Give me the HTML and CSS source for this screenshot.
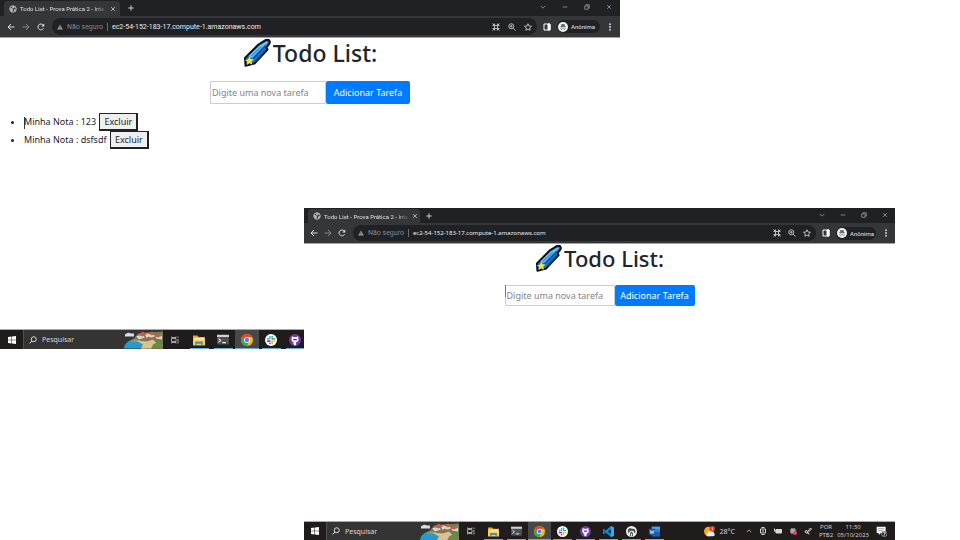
FILE: index.html
```
<!DOCTYPE html>
<html lang="pt-BR">
<head>
<meta charset="utf-8">
<title>Todo List - Prova Prática 2</title>
<link rel="stylesheet" href="styles.css">
</head>
<body>
<svg class="sprite" aria-hidden="true">
  <symbol id="globe" viewBox="0 0 16 16"><circle cx="8" cy="8" r="6.500" fill="#35363a" stroke="#b9bcc0" stroke-width="2"/><path d="M2 5l5 2 1 3-1 4-4-3zM7 2l5 1-1 3-3 1-2-2zM10 9l4-1-1 4-3 1z" fill="#b9bcc0" stroke="none"/></symbol>
  <symbol id="close" viewBox="0 0 16 16"><path d="M3 3l10 10M13 3L3 13"/></symbol>
  <symbol id="plus" viewBox="0 0 16 16"><path d="M8 1v14M1 8h14"/></symbol>
  <symbol id="down" viewBox="0 0 16 16"><path d="M2 5l6 6 6-6"/></symbol>
  <symbol id="up" viewBox="0 0 16 16"><path d="M2 11l6-6 6 6"/></symbol>
  <symbol id="minus" viewBox="0 0 16 16"><path d="M2 8h12"/></symbol>
  <symbol id="restore" viewBox="0 0 16 16"><path d="M2 5h9v9H2zM5 5V2h9v9h-3"/></symbol>
  <symbol id="back" viewBox="0 0 16 16"><path d="M15 8H2M8 2L2 8l6 6"/></symbol>
  <symbol id="forward" viewBox="0 0 16 16"><path d="M1 8h13M8 2l6 6-6 6"/></symbol>
  <symbol id="reload" viewBox="0 0 16 16"><path d="M13 10.500A5.800 5.800 0 1 1 12.500 4.300"/><path d="M14.500 1v6h-6z" fill="currentColor" stroke="none"/></symbol>
  <symbol id="warn" viewBox="0 0 16 16"><path d="M8 1l7.500 13.500H.5z" fill="currentColor" stroke="none"/><path d="M8 6v4M8 11.500v1.500" stroke="#202124"/></symbol>
  <symbol id="qr" viewBox="0 0 16 16"><path d="M1 1l4 4M15 1l-4 4M1 15l4-4M15 15l-4-4M5 5h6v6H5zM1 5h4V1M15 5h-4V1M1 11h4v4M15 11h-4v4"/></symbol>
  <symbol id="magnify" viewBox="0 0 16 16"><circle cx="6.500" cy="6.500" r="5"/><path d="M10.500 10.500L15 15M4 6.500h5M6.500 4v5"/></symbol>
  <symbol id="search" viewBox="0 0 16 16"><circle cx="9.500" cy="6.500" r="5"/><path d="M6 10l-5 5"/></symbol>
  <symbol id="star" viewBox="0 0 16 16"><path d="M8 1.500l2 4.500 5 .5-3.700 3.300 1 4.900L8 12l-4.300 2.700 1-4.900L1 6.500 6 6z"/></symbol>
  <symbol id="panel" viewBox="0 0 16 16"><path d="M2 2h12v12H2z"/><path d="M10 2h4v12h-4z" fill="currentColor"/></symbol>
  <symbol id="incognito" viewBox="0 0 16 16"><circle cx="8" cy="8" r="8" fill="#f1f3f4" stroke="none"/><path d="M5.500 3h5l1 4h-7zM3 7h10v1H3z" fill="#6b6e72" stroke="none"/><circle cx="5.700" cy="10.500" r="1.500" stroke="#6b6e72"/><circle cx="10.300" cy="10.500" r="1.500" stroke="#6b6e72"/></symbol>
  <symbol id="dots" viewBox="0 0 16 16"><g fill="currentColor" stroke="none"><circle cx="8" cy="2.500" r="1.800"/><circle cx="8" cy="8" r="1.800"/><circle cx="8" cy="13.500" r="1.800"/></g></symbol>
  <symbol id="comet" viewBox="0 0 27 28"><path d="M1.500 19L15 5.500 22 1.200q3-1.200 4 .8t-1.200 4L23 8.500l1 2L11 24.500 2 26.800z" fill="#1473c8" stroke="#0b1118" stroke-width="2" stroke-linejoin="round"/><path d="M5 17L16 6.500 23 2.500q1.500 0 1 1.500L9 19z" fill="#6cc4f5"/><path d="M9 20L22 6.500M12 22l10-11" stroke="#0b4fa3" stroke-width="1.500"/><path d="M8 17L18 7.500" stroke="#3c93de" stroke-width="1.500"/><path d="M6 17l1.300 3 3.200.3-2.400 2.200.8 3.200-2.900-1.600-2.800 1.800.6-3.300L1.200 21l3.300-.5z" fill="#ffdf35"/></symbol>
  <symbol id="windows" viewBox="0 0 16 16"><path d="M0 2.200L7 1.200v6.300H0zM8 1l8-1v7.500H8zM0 8.500h7v6.300l-7-1zM8 8.500h8V16l-8-1z" fill="#fff" stroke="none"/></symbol>
  <symbol id="island" viewBox="0 0 39 18"><path d="M0 18Q0 12 8 9l14 2 1 7z" fill="#2899cc"/><path d="M6 11l7-5 8-3L39 2v16H17q4-5-2-7z" fill="#a69370"/><path d="M9 9l5-6 10-1 15-1v13l-8-1-4-3-7 1-8-2z" fill="#6c7f52"/><path d="M12 6l6-2 3 3-6 2zM20 3l9 0 2 3-8 2zM31 5l7-1v5l-6-1z" fill="#d9d7cd"/><path d="M14 4l5-3 4 3-5 2zM24 3l4-2 4 2-4 2zM30 6l4-3 5 2-5 2zM21 8l4-2 3 2-4 1z" fill="#c06049"/><path d="M12 10l11 1 6-2 4 4-5 5H17l2-4z" fill="#dcc293"/><path d="M29 14l5-3 5 3v4H27z" fill="#6f8a45"/><path d="M1 4q3-3 6-1h3v3H1z" fill="#d8dddf"/></symbol>
  <symbol id="taskview" viewBox="0 0 16 16"><path d="M1 1v2h9V1M1 5h9v6H1zM1 15v-2h9v2M14 1v3M14 6v9"/></symbol>
  <symbol id="folder" viewBox="0 0 16 16"><path d="M0 2h6l1.500 2H16v11H0z" fill="#e7a927"/><path d="M1 5h14v5H1z" fill="#ffe694"/><path d="M0 8h16v7H0z" fill="#fbd157"/><path d="M3 10h10v5h-2v-2H5v2H3z" fill="#3c91d0"/></symbol>
  <symbol id="terminal" viewBox="0 0 16 16"><path d="M0 2h16v12H0z" fill="#4b4e52"/><path d="M0 1h16v3H0z" fill="#d0d2d4"/><path d="M2 6l3 2.500L2 11M7 11.500h5" stroke="#eee" fill="none" stroke-width="1.400"/></symbol>
  <symbol id="chrome" viewBox="0 0 16 16"><circle cx="8" cy="8" r="8" fill="#fbbc04"/><path d="M8 16A8 8 0 0 1 1.070 4L5 10l5 2z" fill="#34a853"/><path d="M14.930 4A8 8 0 0 0 1.070 4L4.500 10 8 4z" fill="#e94235"/><circle cx="8" cy="8" r="4" fill="#fff"/><circle cx="8" cy="8" r="3" fill="#4285f4"/></symbol>
  <symbol id="slack" viewBox="0 0 16 16"><circle cx="8" cy="8" r="8" fill="#fff"/><g stroke-width="2.200" stroke-linecap="round"><path d="M6.500 3.500v3M3.300 6.500h1" stroke="#36c5f0"/><path d="M9.500 6.500h3M9.500 3.300v1" stroke="#2eb67d"/><path d="M9.500 9.500v3M12.500 9.500h.3" stroke="#ecb22e"/><path d="M3.500 9.500h3M6.500 12.500v.2" stroke="#e01e5a"/></g></symbol>
  <symbol id="github" viewBox="0 0 16 16"><circle cx="8" cy="8" r="8" fill="#6d3aa2"/><path d="M4 3l2 1h4l2-1 .5 3q1 4-3 5v4H6.500v-2l-2-1 2-.5V11q-4-1-3-5z" fill="#fff"/><path d="M5.500 6.500h5v2h-5z" fill="#6d3aa2"/></symbol>
  <symbol id="code" viewBox="0 0 16 16"><path d="M11.500 0L16 2v12l-4.500 2L4 9.500 1.500 12 0 11V5l1.500-1L4 6.500z" fill="#148bd3"/><path d="M11.500 4.500v7L7 8zM1.500 6.500v3L3 8z" fill="#1e1f22"/><path d="M11.500 0L16 2v12l-4.500 2z" fill="#38a9ee"/></symbol>
  <symbol id="beaver" viewBox="0 0 16 16"><circle cx="8" cy="8" r="8" fill="#e9eeec"/><path d="M3 5l3-2 2 1h3l2 1 1 4-2 1-1-3H6l-2 3-1-1z" fill="#3e4846"/><path d="M6 10l2-2 2 2v5H6z" fill="#3e4846"/><path d="M7.300 11h1.400v3H7.300z" fill="#fff"/></symbol>
  <symbol id="word" viewBox="0 0 16 16"><path d="M4 1h12v14H4z" fill="#2b7cd3"/><path d="M4 1h12v4H4z" fill="#41a5ee"/><path d="M4 9h12v6H4z" fill="#185abd"/><path d="M0 4h9v9H0z" fill="#1c56a8"/><path d="M1.500 6l1.500 5 1.500-4L6 11l1.500-5" stroke="#fff" fill="none"/></symbol>
  <symbol id="weather" viewBox="0 0 16 16"><circle cx="7" cy="8" r="7" fill="#f8a91b"/><path d="M5 15a3 3 0 0 1 0-5 4 4 0 0 1 7-1 3 3 0 0 1 1 6z" fill="#e8eef7"/><circle cx="12" cy="4" r="4" fill="#dd3c2c"/><path d="M12 2v4" stroke="#fff"/></symbol>
  <symbol id="meet" viewBox="0 0 16 16"><path d="M3 4h10v8H3zM5 1h6M5 15h6M8 6v4"/></symbol>
  <symbol id="battery" viewBox="0 0 16 16"><path d="M4 5h11v7H4z" fill="currentColor"/><path d="M1 3v4h3M2 7v3"/></symbol>
  <symbol id="slacktray" viewBox="0 0 16 16"><path d="M6 2v12M10 2v12M2 6h12M2 10h12" stroke-width="2"/><circle cx="12" cy="12" r="4" fill="#f0367d" stroke="none"/></symbol>
  <symbol id="pen" viewBox="0 0 16 16"><path d="M6 10L13 2l2 2-7 7zM6 7q-5 0-4 3t6 2q3 0 2 3"/></symbol>
  <symbol id="notice" viewBox="0 0 16 16"><path d="M1 1h13v9H7l-3 3v-3H1z" fill="#fff" stroke="none"/><path d="M3 4h9M3 7h7" stroke="#777"/><circle cx="12" cy="11.500" r="4" fill="#303030" stroke="#aaa"/><path d="M10.500 9.500h3L11.500 14" stroke="#fff"/></symbol>
</svg>

<main class="desktop">
  <section class="window window-notes" aria-label="Lista com notas">
    <header class="titlebar">
      <div class="tab"><svg class="icon favicon"><use href="#globe"/></svg><span class="tab-title">Todo List - Prova Prática 2 - Inte</span><button class="glyph tab-close" aria-label="Fechar guia"><svg class="icon small"><use href="#close"/></svg></button></div>
      <button class="glyph new-tab" aria-label="Nova guia"><svg class="icon small"><use href="#plus"/></svg></button>
      <div class="controls"><button class="glyph" aria-label="Pesquisar guias"><svg class="icon small"><use href="#down"/></svg></button><button class="glyph" aria-label="Minimizar"><svg class="icon small"><use href="#minus"/></svg></button><button class="glyph" aria-label="Restaurar"><svg class="icon small"><use href="#restore"/></svg></button><button class="glyph" aria-label="Fechar"><svg class="icon small"><use href="#close"/></svg></button></div>
    </header>
    <nav class="toolbar" aria-label="Navegação">
      <div class="history"><button class="glyph" aria-label="Voltar"><svg class="icon"><use href="#back"/></svg></button><button class="glyph dim" aria-label="Avançar"><svg class="icon"><use href="#forward"/></svg></button><button class="glyph" aria-label="Atualizar"><svg class="icon"><use href="#reload"/></svg></button></div>
      <div class="omnibox"><svg class="icon small muted"><use href="#warn"/></svg><span class="unsafe">Não seguro</span><a class="url" href="#">ec2-54-152-183-17.compute-1.amazonaws.com</a>
        <div class="actions"><svg class="icon"><use href="#qr"/></svg><svg class="icon"><use href="#magnify"/></svg><svg class="icon"><use href="#star"/></svg></div></div>
      <button class="glyph side" aria-label="Painel lateral"><svg class="icon"><use href="#panel"/></svg></button>
      <button class="profile"><svg class="avatar"><use href="#incognito"/></svg>Anônima</button>
      <button class="glyph more" aria-label="Mais"><svg class="icon"><use href="#dots"/></svg></button>
    </nav>
    <div class="page">
      <h1><svg class="comet" aria-hidden="true"><use href="#comet"/></svg>Todo List:</h1>
      <form class="task-form"><input type="text" aria-label="Nova tarefa" placeholder="Digite uma nova tarefa"><button type="button">Adicionar Tarefa</button></form>
      <ul class="notes">
        <li><span class="caret"></span>Minha Nota : 123 <button>Excluir</button></li>
        <li>Minha Nota : dsfsdf <button>Excluir</button></li>
      </ul>
    </div>
    <footer class="taskbar">
      <button class="start" aria-label="Iniciar"><svg class="icon"><use href="#windows"/></svg></button>
      <div class="search"><svg class="icon"><use href="#search"/></svg><span>Pesquisar</span><svg class="island"><use href="#island"/></svg></div>
      <div class="apps"><button class="plain" aria-label="Visão de tarefas"><svg class="icon"><use href="#taskview"/></svg></button><button aria-label="Arquivos"><svg class="app"><use href="#folder"/></svg></button><button aria-label="Terminal"><svg class="app"><use href="#terminal"/></svg></button><button class="active" aria-label="Chrome"><svg class="app"><use href="#chrome"/></svg></button><button aria-label="Slack"><svg class="app"><use href="#slack"/></svg></button><button aria-label="GitHub"><svg class="app"><use href="#github"/></svg></button></div>
    </footer>
  </section>

  <section class="window window-empty" aria-label="Lista vazia">
    <header class="titlebar">
      <div class="tab"><svg class="icon favicon"><use href="#globe"/></svg><span class="tab-title">Todo List - Prova Prática 2 - Inte</span><button class="glyph tab-close" aria-label="Fechar guia"><svg class="icon small"><use href="#close"/></svg></button></div>
      <button class="glyph new-tab" aria-label="Nova guia"><svg class="icon small"><use href="#plus"/></svg></button>
      <div class="controls"><button class="glyph" aria-label="Pesquisar guias"><svg class="icon small"><use href="#down"/></svg></button><button class="glyph" aria-label="Minimizar"><svg class="icon small"><use href="#minus"/></svg></button><button class="glyph" aria-label="Restaurar"><svg class="icon small"><use href="#restore"/></svg></button><button class="glyph" aria-label="Fechar"><svg class="icon small"><use href="#close"/></svg></button></div>
    </header>
    <nav class="toolbar" aria-label="Navegação">
      <div class="history"><button class="glyph" aria-label="Voltar"><svg class="icon"><use href="#back"/></svg></button><button class="glyph dim" aria-label="Avançar"><svg class="icon"><use href="#forward"/></svg></button><button class="glyph" aria-label="Atualizar"><svg class="icon"><use href="#reload"/></svg></button></div>
      <div class="omnibox"><svg class="icon small muted"><use href="#warn"/></svg><span class="unsafe">Não seguro</span><a class="url" href="#">ec2-54-152-183-17.compute-1.amazonaws.com</a>
        <div class="actions"><svg class="icon"><use href="#qr"/></svg><svg class="icon"><use href="#magnify"/></svg><svg class="icon"><use href="#star"/></svg></div></div>
      <button class="glyph side" aria-label="Painel lateral"><svg class="icon"><use href="#panel"/></svg></button>
      <button class="profile"><svg class="avatar"><use href="#incognito"/></svg>Anônima</button>
      <button class="glyph more" aria-label="Mais"><svg class="icon"><use href="#dots"/></svg></button>
    </nav>
    <div class="page">
      <h1><svg class="comet" aria-hidden="true"><use href="#comet"/></svg>Todo List:</h1>
      <form class="task-form"><span class="caret"></span><input type="text" aria-label="Nova tarefa" placeholder="Digite uma nova tarefa"><button type="button">Adicionar Tarefa</button></form>
    </div>
    <footer class="taskbar">
      <button class="start" aria-label="Iniciar"><svg class="icon"><use href="#windows"/></svg></button>
      <div class="search"><svg class="icon"><use href="#search"/></svg><span>Pesquisar</span><svg class="island"><use href="#island"/></svg></div>
      <div class="apps"><button class="plain" aria-label="Visão de tarefas"><svg class="icon"><use href="#taskview"/></svg></button><button aria-label="Arquivos"><svg class="app"><use href="#folder"/></svg></button><button aria-label="Terminal"><svg class="app"><use href="#terminal"/></svg></button><button class="active" aria-label="Chrome"><svg class="app"><use href="#chrome"/></svg></button><button aria-label="Slack"><svg class="app"><use href="#slack"/></svg></button><button aria-label="GitHub"><svg class="app"><use href="#github"/></svg></button><button aria-label="Editor"><svg class="app"><use href="#code"/></svg></button><button aria-label="Banco de dados"><svg class="app"><use href="#beaver"/></svg></button><button aria-label="Word"><svg class="app"><use href="#word"/></svg></button></div>
      <div class="tray">
        <div class="weather"><svg class="app"><use href="#weather"/></svg><span>28°C</span></div>
        <div class="status"><svg class="icon small"><use href="#up"/></svg><svg class="icon"><use href="#meet"/></svg><svg class="icon"><use href="#battery"/></svg><svg class="icon"><use href="#slacktray"/></svg><svg class="icon"><use href="#pen"/></svg></div>
        <div class="stack"><span>POR</span><span>PTB2</span></div>
        <div class="stack date"><span>11:30</span><span>05/10/2023</span></div>
        <svg class="app"><use href="#notice"/></svg>
      </div>
    </footer>
  </section>
</main>
</body>
</html>
```
FILE: styles.css
```
* { box-sizing: border-box; }
body { margin: 0; background: #fff; font-family: "Noto Sans", "Open Sans", sans-serif; }
button, input { font: inherit; color: inherit; margin: 0; padding: 0; border: 0; background: none; }
.sprite { display: none; }
.desktop { position: relative; min-height: 100vh; overflow: hidden; }

/* Windows sit freely on the desktop */
.window { position: absolute; display: flex; flex-direction: column; background: #fff; overflow: hidden; }
.window-notes {
  left: 0; right: 340px; top: 0; min-height: 349px;
  --title-h: 16px; --tool-h: 21px; --cell: 22px; --step: 15px;
  --tab-w: 116px; --new-gap: 8px; --box: 17px; --chip: 43px; --tail: 20px; --actions: 8px;
  --start: 23px; --search: 140px; --app-cell: 24px; --app: 12px; --bar-h: 20px;
  --h1: 23px; --comet: 28px; --h1-line: 30px; --field: 116px; --add: 84px; --field-h: 23px;
}
.window-empty {
  left: 304px; right: 65px; top: 208px; min-height: 332px;
  --title-h: 15px; --tool-h: 20px; --cell: 21px; --step: 14px;
  --tab-w: 112px; --new-gap: 6px; --box: 16px; --chip: 40px; --tail: 19px; --actions: 7px;
  --start: 22px; --search: 133px; --app-cell: 23px; --app: 11px; --bar-h: 19px;
  --h1: 22px; --comet: 27px; --h1-line: 28px; --field: 110px; --add: 80px; --field-h: 21px;
}

.icon { width: 8px; height: 8px; flex: none; fill: none; stroke: currentColor; stroke-width: 2; display: block; }
.icon.small { width: 6px; height: 6px; }
.glyph { display: flex; align-items: center; justify-content: center; flex: none; }

.titlebar, .toolbar { font-family: Roboto, "Open Sans", sans-serif; }
.titlebar { display: flex; height: var(--title-h); background: #202124; color: #d2d4d7; }
.tab { display: flex; align-items: center; width: var(--tab-w); margin: 1px 0 0 4px; padding: 0 4px 0 5px; gap: 3px; background: #35363a; border-radius: 4px 4px 0 0; font-size: 6px; }
.tab-title { flex: 1; white-space: nowrap; color: #dfe1e5; -webkit-mask-image: linear-gradient(90deg, #000 85%, transparent); mask-image: linear-gradient(90deg, #000 85%, transparent); }
.new-tab { margin-left: var(--new-gap); color: #fff; }
.controls { display: flex; margin-left: auto; padding-bottom: 2px; color: #9fa1a5; }
.controls .glyph { width: var(--cell); }

.toolbar { display: flex; align-items: center; height: var(--tool-h); background: #35363a; color: #dcdee1; box-shadow: 0 1px #a5a5a8; z-index: 1; }
.history { display: flex; padding: 0 4px 0 3px; }
.history .glyph { width: var(--step); }
.dim { color: #85878b; }
.omnibox { display: flex; align-items: center; flex: 1; height: var(--box); padding: 0 5px; gap: 4px; border-radius: 9px; background: #202124; font-size: 7px; }
.muted { color: #a0a3a7; }
.unsafe { color: #85898e; padding-right: 4px; border-right: 1px solid #686b70; line-height: 8px; white-space: nowrap; }
.url { color: #eceef0; text-decoration: none; white-space: nowrap; }
.window-empty .url { font-family: "Noto Sans", sans-serif; font-size: 6px; }
.actions { display: flex; gap: var(--actions); margin-left: auto; color: #b9bbbe; }
.side { width: 20px; color: #fff; }
.profile { display: flex; align-items: center; gap: 3px; width: var(--chip); height: 13px; border-radius: 7px; background: #202124; color: #e3e5e8; font-size: 6px; padding-left: 1px; }
.avatar { width: 10px; height: 10px; flex: none; fill: none; }
.more { width: var(--tail); }

.page { flex: 1; color: #212529; font-size: 9px; line-height: 18px; }
h1 { display: flex; justify-content: center; align-items: center; gap: 2px; margin: 0 0 13px; padding-top: 1px; font-size: var(--h1); line-height: var(--h1-line); font-weight: 500; }
.comet { width: var(--comet); height: var(--comet); }
.task-form { display: flex; justify-content: center; height: var(--field-h); }
.task-form input { width: var(--field); padding: 0 1px; border: 1px solid #ccc; border-radius: 1px; }
.task-form input::placeholder { color: #858585; opacity: 1; }
.task-form button { width: var(--add); border-radius: 2px; background: #007bff; color: #fff; white-space: nowrap; }
.caret { display: inline-block; width: 1px; height: 12px; margin-right: -1px; background: #333; vertical-align: middle; }
.task-form .caret { z-index: 1; background: #777; }
.notes { display: grid; grid-auto-rows: 18px; margin: 9px 0 0; padding-left: 24px; }
.notes li::marker { font-size: 9px; }
.notes button { height: 18px; margin-left: 1px; padding: 0 4px; border: 1px solid #222; border-width: 1px 2px 2px 1px; background: #efefef; line-height: 15px; vertical-align: top; }

.taskbar { display: flex; height: var(--bar-h); border-top: 1px solid #aaa; background: #1f1c1b; color: #d8d8d8; font-size: 7px; }
.start { display: flex; align-items: center; justify-content: center; width: var(--start); }
.search { display: flex; align-items: center; gap: 5px; width: var(--search); padding-left: 5px; background: #343434; border-left: 1px solid #505050; overflow: hidden; }
.island { width: 39px; height: 19px; margin-left: auto; }
.apps { display: flex; }
.apps button { display: flex; align-items: center; justify-content: center; width: var(--app-cell); background-image: linear-gradient(#6dace0, #6dace0); background-size: 19px 1px; background-position: bottom; background-repeat: no-repeat; }
.apps .plain { background-image: none; color: #a5a5a5; }
.apps .active { background-color: #484848; background-size: 100% 1px; }
.app { width: var(--app); height: var(--app); flex: none; fill: none; }
.tray { display: flex; align-items: center; margin-left: auto; padding-right: 8px; gap: 7px; }
.weather { display: flex; align-items: center; gap: 4px; padding-right: 4px; }
.status { display: flex; align-items: center; gap: 7px; }
.stack { display: flex; flex-direction: column; align-items: center; font-family: "Open Sans", sans-serif; font-size: 6px; line-height: 8px; }
.date { margin-left: -3px; }
```
